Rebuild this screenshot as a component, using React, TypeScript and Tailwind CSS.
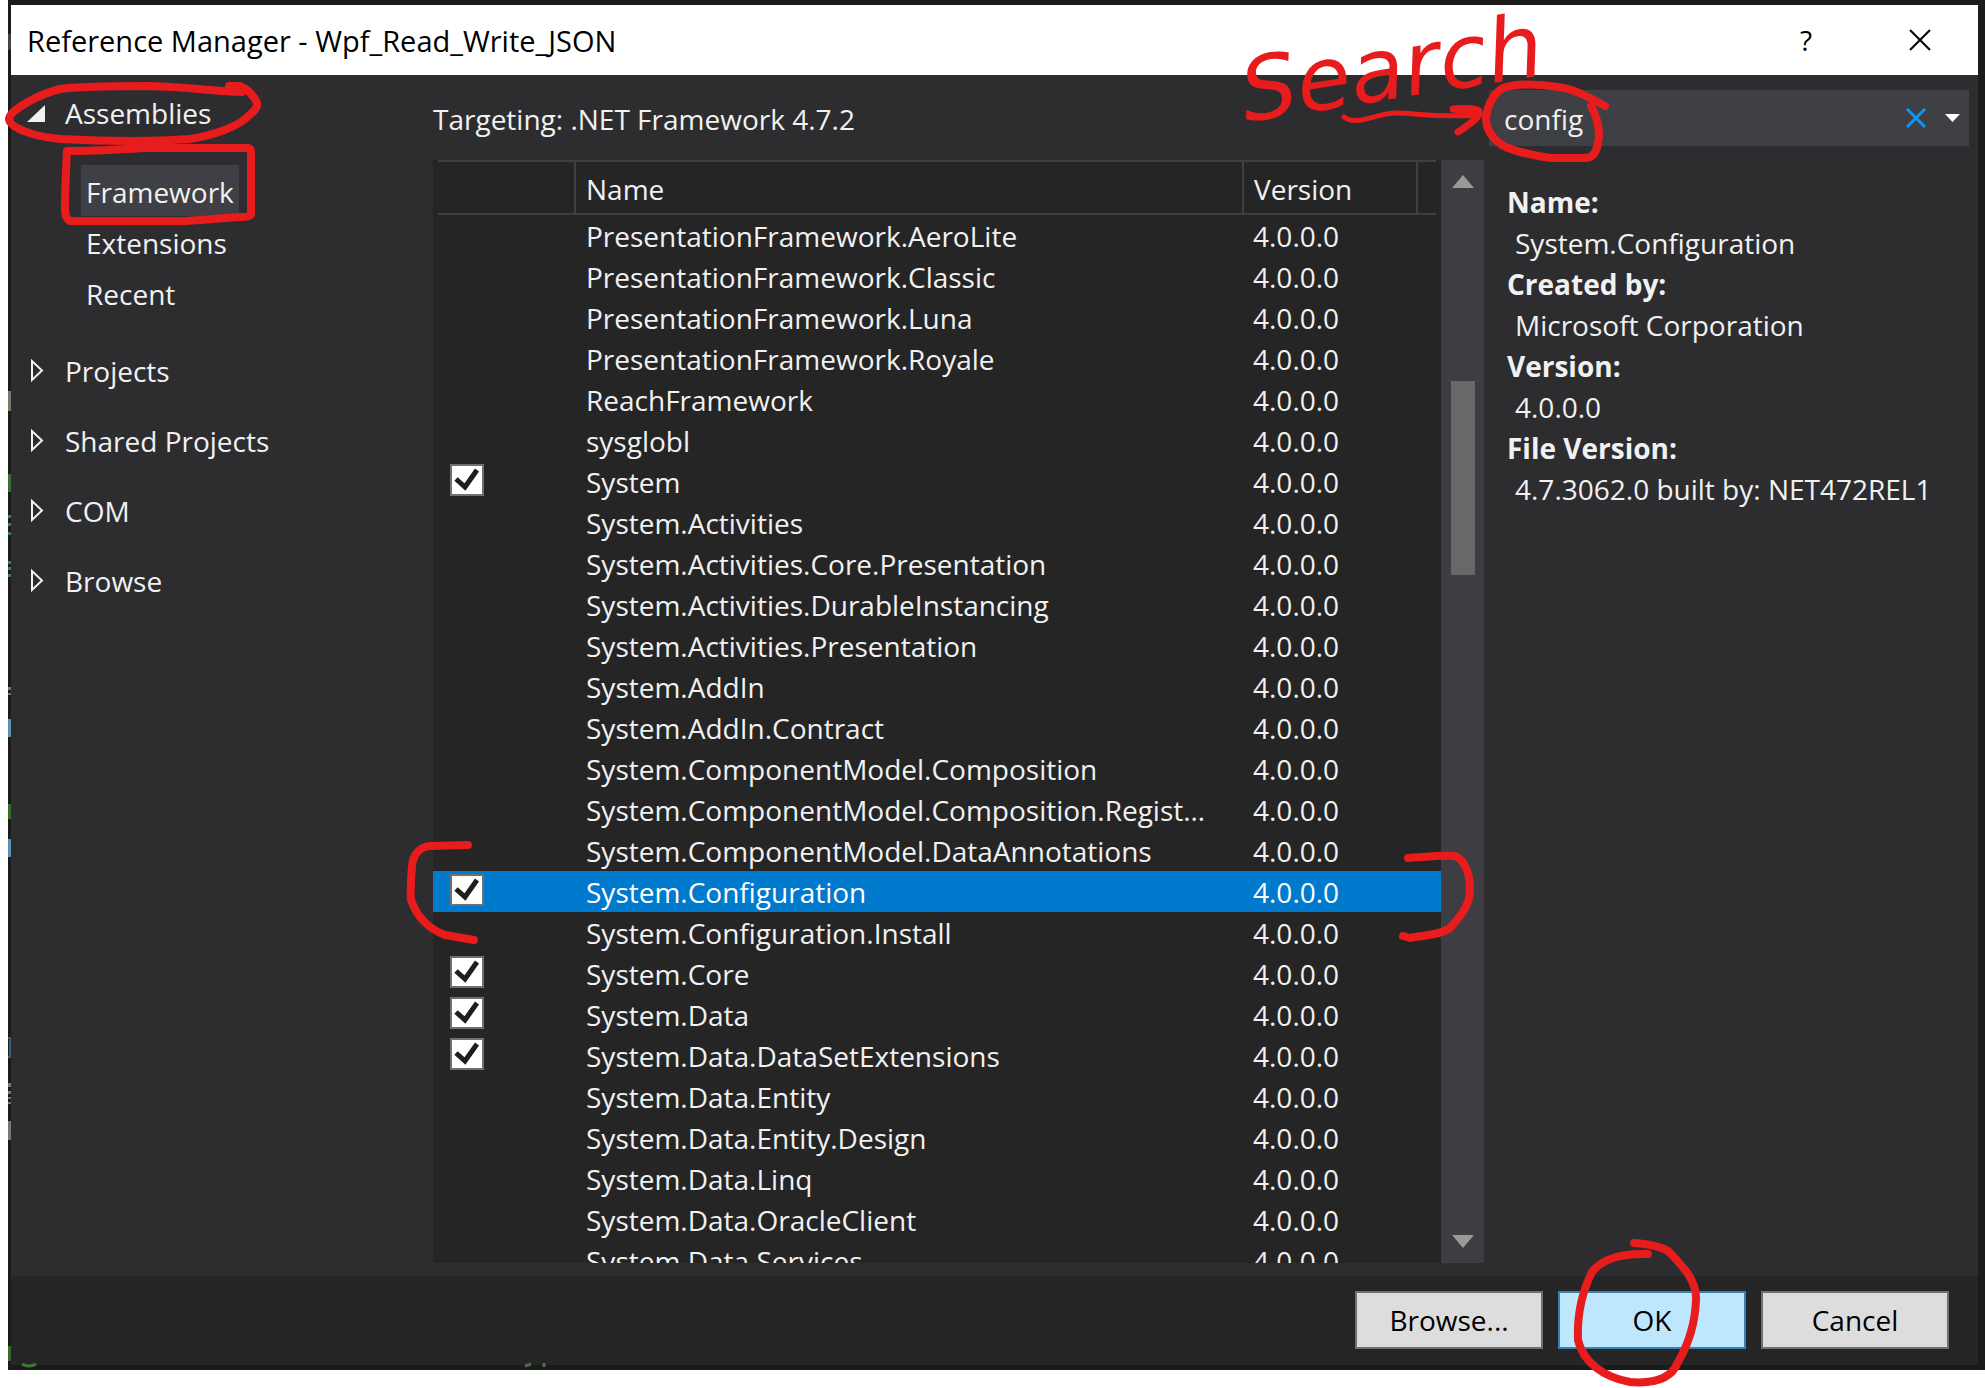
import React from "react";

type Assembly = { name: string; checked?: boolean; selected?: boolean };

const assemblies: Assembly[] = [
  { name: "PresentationFramework.AeroLite" },
  { name: "PresentationFramework.Classic" },
  { name: "PresentationFramework.Luna" },
  { name: "PresentationFramework.Royale" },
  { name: "ReachFramework" },
  { name: "sysglobl" },
  { name: "System", checked: true },
  { name: "System.Activities" },
  { name: "System.Activities.Core.Presentation" },
  { name: "System.Activities.DurableInstancing" },
  { name: "System.Activities.Presentation" },
  { name: "System.AddIn" },
  { name: "System.AddIn.Contract" },
  { name: "System.ComponentModel.Composition" },
  { name: "System.ComponentModel.Composition.Registration" },
  { name: "System.ComponentModel.DataAnnotations" },
  { name: "System.Configuration", checked: true, selected: true },
  { name: "System.Configuration.Install" },
  { name: "System.Core", checked: true },
  { name: "System.Data", checked: true },
  { name: "System.Data.DataSetExtensions", checked: true },
  { name: "System.Data.Entity" },
  { name: "System.Data.Entity.Design" },
  { name: "System.Data.Linq" },
  { name: "System.Data.OracleClient" },
  { name: "System.Data.Services" },
];

const details = [
  ["Name:", "System.Configuration"],
  ["Created by:", "Microsoft Corporation"],
  ["Version:", "4.0.0.0"],
  ["File Version:", "4.7.3062.0 built by: NET472REL1"],
];

function TitleBar() {
  return (
    <header className="flex h-[70px] shrink-0 items-center bg-white pl-4 pr-[38px] text-black">
      <h1 className="flex-1 text-[29px] leading-[41px]">Reference Manager - Wpf_Read_Write_JSON</h1>
      <button type="button" aria-label="Help" className="w-20">
        ?
      </button>
      <button type="button" aria-label="Close" className="ml-[54px] flex w-10 justify-center">
        <svg width="22" height="22" viewBox="0 0 22 22" fill="none" stroke="#000" strokeWidth="2">
          <path d="M1 1L21 21M21 1L1 21" />
        </svg>
      </button>
    </header>
  );
}

function Sidebar() {
  return (
    <nav aria-label="Reference categories" className="w-[422px] shrink-0 pt-[18px]">
      <button type="button" aria-expanded="true" className="flex h-[41px] items-center pl-4">
        <svg className="mr-5" width="18" height="18" viewBox="0 0 18 18">
          <path d="M18 0V17H0Z" fill="#f1f1f1" />
        </svg>
        Assemblies
      </button>
      <ul className="pl-[70px] pt-[31px]">
        {["Framework", "Extensions", "Recent"].map((label, i) => (
          <li key={label}>
            <button
              type="button"
              className={i === 0 ? "h-[51px] bg-[#3f3f46] px-[5px] pt-[3px]" : "h-[51px] px-[5px] pt-[3px]"}
            >
              {label}
            </button>
          </li>
        ))}
      </ul>
      <div className="mt-[18px] flex flex-col">
        {["Projects", "Shared Projects", "COM", "Browse"].map((label) => (
          <button type="button" aria-expanded="false" key={label} className="flex h-[70px] items-center pl-5">
            <svg className="mr-[21px]" width="13" height="26" viewBox="0 0 13 26" fill="none">
              <path d="M1 3V22L11 12.500Z" stroke="#f1f1f1" strokeWidth="2" />
            </svg>
            {label}
          </button>
        ))}
      </div>
    </nav>
  );
}

function CheckBox({ label }: { label: string }) {
  return (
    <span className="relative block h-8 w-[34px]">
      <input
        type="checkbox"
        defaultChecked
        aria-label={label}
        className="block h-8 w-[34px] appearance-none border-2 border-[#707070] bg-white"
      />
      <svg className="pointer-events-none absolute inset-0" width="34" height="32" viewBox="0 0 34 32" fill="none">
        <path d="M6 15L15 23L27 6" stroke="#1e1e1e" strokeWidth="5" />
      </svg>
    </span>
  );
}

function AssemblyList() {
  return (
    <div className="flex min-h-0 flex-1">
      <div className="min-h-0 min-w-0 flex-1 overflow-hidden bg-[#252526]">
        <table className="w-full table-fixed border-collapse text-left">
          <colgroup>
            <col className="w-[5px]" />
            <col className="w-[137px]" />
            <col />
            <col className="w-[174px]" />
            <col className="w-[19px]" />
            <col className="w-[5px]" />
          </colgroup>
          <thead>
            <tr className="h-[53px]">
              <td />
              <th className="border-y-2 border-r-2 border-[#3f3f46]" aria-label="Selected" />
              <th className="border-y-2 border-r-2 border-[#3f3f46] px-2.5 pb-0 pt-1 font-normal">Name</th>
              <th className="border-y-2 border-r-2 border-[#3f3f46] px-2.5 pb-0 pt-1 font-normal">Version</th>
              <td className="border-y-2 border-[#3f3f46]" />
              <td />
            </tr>
          </thead>
          <tbody className="leading-[39px]">
            {assemblies.map((a) => (
              <tr key={a.name} className={a.selected ? "h-[41px] bg-[#007acc] text-white" : "h-[41px]"}>
                <td />
                <td className="p-0 pl-3 pt-[3px] align-top">{a.checked && <CheckBox label={a.name} />}</td>
                <td className="truncate p-0 pl-[11px] pr-7 pt-0.5">{a.name}</td>
                <td className="p-0 pl-2.5 pt-0.5">4.0.0.0</td>
                <td />
                <td />
              </tr>
            ))}
          </tbody>
        </table>
      </div>
      <div className="flex w-[43px] shrink-0 flex-col items-center bg-[#3e3e42] pb-[15px] pt-[15px]">
        <svg width="22" height="13" viewBox="0 0 22 13">
          <path d="M11 0L22 13H0Z" fill="#999" />
        </svg>
        <div className="mt-[193px] h-[194px] w-6 bg-[#686868]" />
        <svg className="mt-auto" width="22" height="13" viewBox="0 0 22 13">
          <path d="M0 0H22L11 13Z" fill="#999" />
        </svg>
      </div>
    </div>
  );
}

function DetailsPane() {
  return (
    <aside className="w-[494px] shrink-0 pl-[5px] pr-[9px] pt-[15px]">
      <div className="flex h-14 items-center bg-[#3f3f46] pl-[15px] pr-[9px]">
        <input
          type="text"
          aria-label="Search assemblies"
          defaultValue="config"
          className="min-w-0 flex-1 bg-transparent pt-0.5 outline-none"
        />
        <button type="button" aria-label="Clear search">
          <svg width="20" height="20" viewBox="0 0 20 20" stroke="#0e97f2" strokeWidth="3">
            <path d="M1 1L19 19M19 1L1 19" />
          </svg>
        </button>
        <button type="button" aria-label="Search options" className="ml-[19px]">
          <svg width="15" height="8" viewBox="0 0 15 8">
            <path d="M0 0H15L7.500 8Z" fill="#fff" />
          </svg>
        </button>
      </div>
      <dl className="pl-[18px] pt-9">
        {details.map(([label, value]) => (
          <React.Fragment key={label}>
            <dt className="font-bold">{label}</dt>
            <dd className="pl-2">{value}</dd>
          </React.Fragment>
        ))}
      </dl>
    </aside>
  );
}

function Footer() {
  return (
    <footer className="flex h-[89px] shrink-0 justify-end gap-[15px] bg-[#252526] pr-[29px] pt-[15px]">
      <button type="button" className="h-[58px] w-[188px] border-2 border-[#707070] bg-[#dddddd] text-black">
        Browse...
      </button>
      <button type="button" className="h-[58px] w-[188px] border-2 border-[#3c7fb1] bg-[#bee6fd] text-black">
        OK
      </button>
      <button type="button" className="h-[58px] w-[188px] border-2 border-[#707070] bg-[#dddddd] text-black">
        Cancel
      </button>
    </footer>
  );
}

/* Slivers of the editor window showing round the dialog's edge */
function EditorEdge() {
  return (
    <svg
      className="pointer-events-none absolute inset-0 h-full w-full"
      viewBox="0 0 1985 1388"
      preserveAspectRatio="none"
      fill="none"
      strokeWidth="3"
    >
      <path d="M9.500 34V50" stroke="#444444" />
      <path d="M9.500 391V411" stroke="#7a7a68" />
      <path d="M9.500 474V492" stroke="#3f6b3a" />
      <path d="M9.500 515V518M9.500 523V526M9.500 532V535M9.500 561V564M9.500 567V570M9.500 574V577" stroke="#3f7a70" />
      <path d="M9.500 687V690M9.500 693V695M9.500 1083V1087M9.500 1091V1094M9.500 1097V1099M9.500 1102V1104M9.500 1121V1140" stroke="#777777" />
      <path d="M9.500 719V737M9.500 839V857" stroke="#5a92b0" />
      <path d="M9.500 804V819M9.500 1346V1361" stroke="#3a6a2a" />
      <path d="M8 1038H10V1057H8" stroke="#35627d" strokeWidth="2" />
      <path d="M22 1364Q29 1368 36 1364M525 1366L531 1364M544 1363V1367" stroke="#3f7a35" />
    </svg>
  );
}

/* Red pen marks laid over the dialog */
function InkNotes() {
  return (
    <svg
      className="pointer-events-none absolute inset-0 h-full w-full"
      viewBox="0 0 1985 1388"
      preserveAspectRatio="none"
      fill="none"
      stroke="#e81c1c"
      strokeWidth="8"
      strokeLinecap="round"
      strokeLinejoin="round"
    >
      <path d="M242 92C215 91 185 87 150 86C115 86 80 86 60 89C40 94 9 110 9 119C10 128 35 137 60 139C100 141 150 142 190 139C215 135 235 127 245 119C255 111 258 107 257 103C254 95 246 88 240 86L229 86" />
      <path d="M67 151C95 151 125 149 145 148H248Q252 149 251 155V214Q251 217 240 217C220 218 195 221 180 221H70Q65 218 65 210C65 190 66 170 67 151" />
      <path strokeWidth="7" d="M1453 109C1462 108 1476 108 1479 111C1481 118 1466 126 1458 132M1457 110L1478 116" />
      <path strokeWidth="5" d="M1344 117C1348 121 1354 121 1362 120C1375 117 1385 113 1397 113C1415 113 1440 118 1478 115" />
      <path d="M1605 106C1590 98 1575 89 1558 87C1540 84 1515 83 1503 88C1492 94 1487 108 1486 118C1486 130 1492 138 1502 145C1512 151 1535 156 1550 158H1585C1596 158 1598 146 1599 136C1599 125 1596 115 1591 106" />
      <path d="M468 845L430 846C420 847 413 854 412 866C411 880 410 892 411 900C418 920 432 930 445 935L474 940" />
      <path d="M1408 858C1425 857 1440 855 1455 856C1465 860 1470 874 1470 890C1470 905 1460 917 1450 928C1440 935 1425 935 1410 938L1403 936" />
      <path d="M1648 1254C1620 1253 1602 1259 1592 1272C1582 1292 1577 1315 1578 1340C1583 1362 1603 1377 1630 1382C1655 1384 1672 1378 1678 1362C1688 1345 1695 1325 1696 1300C1697 1282 1685 1268 1668 1251C1660 1246 1648 1244 1634 1243" />
      <text
        x="1246"
        y="122"
        transform="rotate(-9 1246 122)"
        fill="#e81c1c"
        stroke="none"
        className="font-['DejaVu_Sans',sans-serif] text-[88px] italic"
      >
        Search
      </text>
    </svg>
  );
}

export default function App() {
  return (
    <div className="relative flex h-screen flex-col bg-white pb-[18px] pl-2 font-['Open_Sans','Noto_Sans',sans-serif] text-[28px] leading-[41px] text-[#f1f1f1]">
      <div className="flex min-h-0 flex-1 flex-col bg-[#1b1b1c] pb-[5px] pl-[3px] pr-[7px] pt-[5px]">
        <TitleBar />
        <main className="flex min-h-0 flex-1 bg-[#2d2d30]">
          <Sidebar />
          <section className="flex min-h-0 min-w-0 flex-1 flex-col pb-[13px]">
            <p className="h-[85px] shrink-0 pt-6">Targeting: .NET Framework 4.7.2</p>
            <AssemblyList />
          </section>
          <DetailsPane />
        </main>
        <Footer />
      </div>
      <EditorEdge />
      <InkNotes />
    </div>
  );
}
